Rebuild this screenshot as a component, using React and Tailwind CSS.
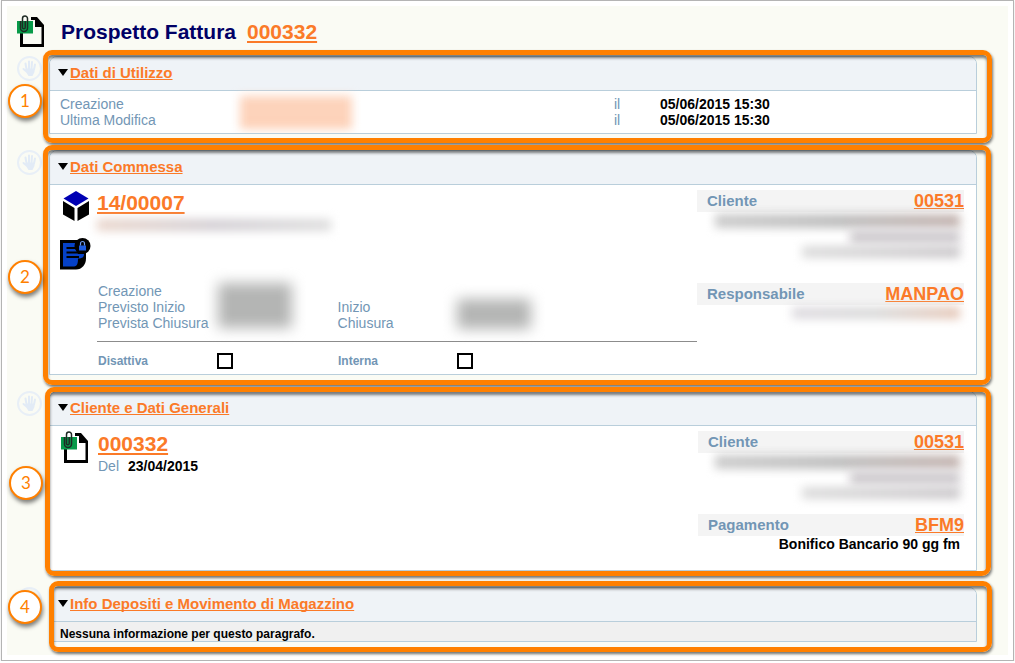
import React, { useState } from "react";

const App = () => {
  const [flags, setFlags] = useState({ disattiva: false, interna: false });

  const handleChange = (e) => {
    const { name, checked } = e.target;
    setFlags({ ...flags, [name]: checked });
  };

  return (
    <div className="mx-px border border-[#b4b4b4] bg-white p-[5px] font-['Liberation_Sans',Arial,sans-serif] text-sm leading-4 text-black shadow-sm">
      <main className="bg-[#fafbf4] pb-[3px]">
        <header className="flex h-11 items-start gap-4 pt-[9px] pl-[10px]">
          <InvoiceIcon />
          <h1 className="flex gap-[11px] pt-1 text-[21px] leading-[26px] font-bold text-[#000066]">
            Prospetto Fattura
            <Link>000332</Link>
          </h1>
        </header>

        <Section
          number="1"
          title="Dati di Utilizzo"
          className="mr-4 ml-9 pt-[6px] pr-[15px] pb-[9px] pl-[6px]"
          badge="top-[34px] -left-[35px]"
          hand="top-[6px] -left-[26px]"
        >
          <div className="grid grid-cols-[180px_1fr_46px_306px] px-[10px] py-[5px]">
            <Label>Creazione</Label>
            <div className="row-span-2 h-8 w-[112px] border-b border-[#fb7a28]/60 bg-[#fdd3bb] blur-[5px]" />
            <Label>il</Label>
            <b>05/06/2015 15:30</b>
            <Label>Ultima Modifica</Label>
            <Label>il</Label>
            <b>05/06/2015 15:30</b>
          </div>
        </Section>

        <Section
          number="2"
          title="Dati Commessa"
          className="mt-[2px] mr-[17px] ml-9 pt-[5px] pr-[14px] pb-[10px] pl-[6px]"
          badge="top-[115px] -left-[35px]"
          hand="top-[5px] -left-[26px]"
        >
          <div className="flex py-[5px] pr-3 pl-[10px]">
            <div className="flex w-[37px] shrink-0 flex-col gap-4 pt-px">
              <CubeIcon />
              <LockedDocIcon />
            </div>
            <div className="flex-1">
              <h3 className="text-[21px] leading-[26px] font-bold">
                <Link>14/00007</Link>
              </h3>
              <div className="h-4 w-[234px] pt-[3px]">
                <div className="h-3 bg-linear-to-r from-[#ead6cc] via-[#d3cfd4] to-[#dedede] blur-[5px]" />
              </div>
              <div className="mt-[51px] grid grid-cols-5 pl-px whitespace-nowrap">
                <Label>Creazione</Label>
                <div className="row-span-3 h-[45px] w-[74px] bg-[#b4b5b4] blur-[7px]" />
                <span className="col-span-3" />
                <Label>Previsto Inizio</Label>
                <Label>Inizio</Label>
                <div className="col-span-2 row-span-2 h-[30px] w-[74px] bg-[#b4b5b4] blur-[7px]" />
                <Label>Prevista Chiusura</Label>
                <Label>Chiusura</Label>
              </div>
              <hr className="mt-[10px] border-[#8c8c8c]" />
              <div className="mt-[11px] grid grid-cols-5 text-xs leading-4 font-bold">
                <Check
                  label="Disattiva"
                  name="disattiva"
                  checked={flags.disattiva}
                  handleChange={handleChange}
                />
                <Check
                  label="Interna"
                  name="interna"
                  checked={flags.interna}
                  handleChange={handleChange}
                />
              </div>
            </div>
            <aside className="w-[267px] shrink-0">
              <InfoBar label="Cliente" value="00531" />
              <HiddenAddress />
              <div className="h-[23px]" />
              <InfoBar label="Responsabile" value="MANPAO" />
              <div className="flex justify-end pt-[2px] pr-1">
                <div className="h-3 w-[168px] bg-linear-to-r from-[#dedbe0] via-[#dadada] to-[#e6c8b8] blur-[5px]" />
              </div>
            </aside>
          </div>
        </Section>

        <Section
          number="3"
          title="Cliente e Dati Generali"
          className="mt-[2px] mr-[17px] ml-[38px] pt-[4px] pr-[14px] pb-[5px] pl-[4px]"
          badge="top-[79px] -left-[36px]"
          hand="top-[4px] -left-[28px]"
        >
          <div className="flex pt-[5px] pr-3 pb-[18px] pl-[10px]">
            <div className="w-[38px] shrink-0 pl-px">
              <InvoiceIcon />
            </div>
            <div className="flex-1">
              <h3 className="text-[21px] leading-[26px] font-bold">
                <Link>000332</Link>
              </h3>
              <p className="flex gap-[9px] pt-px">
                <Label>Del</Label>
                <b>23/04/2015</b>
              </p>
            </div>
            <aside className="w-[266px] shrink-0">
              <InfoBar label="Cliente" value="00531" />
              <HiddenAddress />
              <div className="h-[13px]" />
              <InfoBar label="Pagamento" value="BFM9" />
              <p className="pr-1 text-right font-bold">
                Bonifico Bancario 90 gg fm
              </p>
            </aside>
          </div>
        </Section>

        <Section
          number="4"
          title="Info Depositi e Movimento di Magazzino"
          className="mt-[5px] mr-4 ml-[42px] pt-[6px] pr-[15px] pb-[10px]"
          badge="top-[9px] -left-[41px]"
          hand="top-[6px] -left-[32px]"
        >
          <p className="bg-[#f0f0f0] px-[10px] pt-[5px] text-xs leading-[14px] font-bold">
            Nessuna informazione per questo paragrafo.
          </p>
        </Section>
      </main>
    </div>
  );
};

// Panel with the orange callout frame and its number
const Section = ({ number, title, className, badge, hand, children }) => (
  <section className={`relative ${className}`}>
    <div
      className={`absolute ${hand} flex size-[25px] items-center justify-center rounded-full border-2 border-[#e8eff7]`}
    >
      <HandIcon />
    </div>
    <div className="overflow-hidden rounded-t-lg border border-[#b9cedb] bg-white">
      <h2 className="flex h-[34px] items-center gap-[2px] border-b border-[#b9cedb] bg-[#eff3f7] pb-[2px] pl-2 text-[15px] font-bold">
        <svg width="10" height="7" viewBox="0 0 10 7">
          <path d="M0 0h10L5 7z" />
        </svg>
        <Link>{title}</Link>
      </h2>
      {children}
    </div>
    <div className="pointer-events-none absolute inset-0 rounded-[9px] border-[5px] border-[#ff8000] shadow-[1px_2px_3px_rgba(0,0,0,0.55),inset_0_3px_3px_rgba(0,0,0,0.5)]" />
    <div
      className={`absolute ${badge} flex size-[34px] items-center justify-center rounded-full border-2 border-[#ff8000] bg-white font-[Lato,sans-serif] text-[17px] text-[#ff8000] shadow-[1px_3px_4px_rgba(0,0,0,0.5)]`}
    >
      {number}
    </div>
  </section>
);

const Link = ({ children }) => (
  <a
    href="#"
    className="text-[#fb7a28] underline [text-decoration-skip-ink:none]"
  >
    {children}
  </a>
);

const Label = ({ children }) => (
  <span className="text-[#7296b5]">{children}</span>
);

const Check = ({ label, name, checked, handleChange }) => (
  <>
    <label htmlFor={name} className="pl-px text-[#7296b5]">
      {label}
    </label>
    <input
      id={name}
      type="checkbox"
      name={name}
      checked={checked}
      onChange={handleChange}
      className="size-4 appearance-none border-2 border-black bg-white checked:bg-black"
    />
  </>
);

const InfoBar = ({ label, value }) => (
  <div className="flex h-[22px] items-center justify-between bg-[#f4f4f4] pl-[10px] font-bold">
    <span className="text-[15px] text-[#7296b5]">{label}</span>
    <span className="text-lg leading-[22px]">
      <Link>{value}</Link>
    </span>
  </div>
);

// Customer address, kept unreadable
const HiddenAddress = () => (
  <div className="flex h-12 flex-col items-end gap-[2px] pt-[2px] pr-1">
    <div className="h-[14px] w-[245px] bg-linear-to-r from-[#cccccc] via-[#bebebe] to-[#c4b4b0] blur-[5px]" />
    <div className="h-[14px] w-[110px] bg-[#cfcbcf] blur-[5px]" />
    <div className="h-3 w-[158px] bg-linear-to-r from-[#dcdcdc] to-[#cbc8cb] blur-[5px]" />
  </div>
);

const HandIcon = () => (
  <svg
    width="15"
    height="17"
    viewBox="0 0 15 17"
    fill="none"
    stroke="#e2ebf6"
    strokeLinecap="round"
    strokeWidth="2"
  >
    <path d="M4.500 9L3.500 3.500M7 8.500V1.500M9.500 8.500l.5-6.500M12 9.500l1-5M4.500 11.500L1.500 9" />
    <path d="M4 8.500h8.500v3.500l-2 4H6.500L4 12z" fill="#e2ebf6" stroke="none" />
  </svg>
);

const InvoiceIcon = () => (
  <svg width="28" height="32" viewBox="0 0 28 32" fill="none">
    <path d="M3 18h3v11h18.500V12H18V5h-4V2h6l7 8v22H3z" fill="#000" />
    <path d="M0 6h16v12.500H0z" fill="#079a49" />
    <path
      d="M3.500 6v7a3.500 3.500 0 0 0 7 0V3.500a2.500 2.500 0 0 0-5 0V12.500a1.300 1.300 0 0 0 2.700 0V6"
      stroke="#1f2a24"
      strokeWidth="1.500"
    />
  </svg>
);

const CubeIcon = () => (
  <svg width="30" height="31" viewBox="0 0 30 31" className="shrink-0">
    <path d="M16 0l12.500 7.500L16 15 3.500 7.500z" fill="#0000b3" />
    <path d="M3 10l11.500 7v13L3 23.500zM29 10l-11.500 7v13L29 23.500z" />
  </svg>
);

const LockedDocIcon = () => (
  <svg width="31" height="32" viewBox="0 0 31 32" className="shrink-0">
    <path d="M0 2h26v18.500c0 6-4 11-10 11H0z" />
    <path
      d="M3 5h12v5l3 6h6c0 3-1.500 4.500-6 4.500 0 4-.5 8-4 8H3z"
      fill="#0541c8"
    />
    <path d="M6.500 10H15M6.500 14.500H19M6.500 19H19" stroke="#000" strokeWidth="2" />
    <circle cx="22.500" cy="8" r="8" />
    <path d="M19 7.500h7v5h-7z" fill="#1c5be0" />
    <path
      d="M20.500 7.500V5.500a2 2 0 0 1 4 0v2"
      fill="none"
      stroke="#6d9aef"
      strokeWidth="1.200"
    />
  </svg>
);

export default App;
